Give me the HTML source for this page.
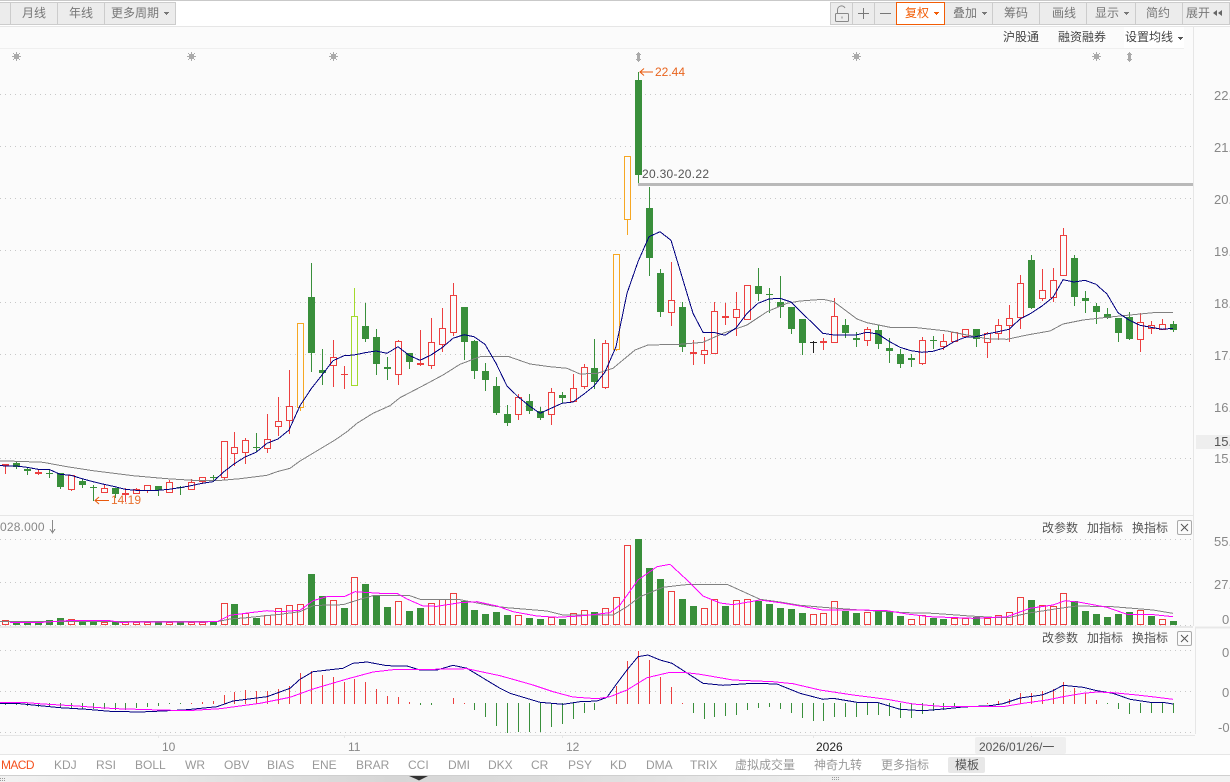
<!DOCTYPE html>
<html lang="zh">
<head>
<meta charset="utf-8">
<title>K线图</title>
<style>
html,body{margin:0;padding:0;background:#fbfbfb}
#p{position:relative;width:1230px;height:782px;overflow:hidden;background:#fbfbfb;font:12px/16px "Liberation Sans","Noto Sans CJK SC",sans-serif;color:#777}
.t{position:absolute;white-space:nowrap;height:16px;line-height:16px}
.b{position:absolute}
.c{color:#555}
.a{color:#888;left:1214px;font-size:13px}
.i{color:#999;top:757px}
svg{position:absolute;left:0;top:0}
</style>
</head>
<body>
<div id="p">
<div class="b" style="left:0;top:0;width:1230px;height:26px;background:#fff"></div>
<div class="b" style="left:0;top:0;width:1230px;height:1px;background:#c9c9c9"></div>
<div class="b" style="left:0;top:26px;width:1230px;height:1px;background:#e6e6e6"></div>
<div class="b" style="left:0;top:48px;width:1184px;height:1px;background:#efefef"></div>
<div class="b" style="left:1124px;top:27px;width:60px;height:21px;background:#fff"></div>

<div class="b" style="left:-1px;top:2px;width:175px;height:21px;background:#ececec;border:1px solid #ccc"></div>
<div class="b" style="left:10px;top:3px;width:1px;height:21px;background:#ccc"></div>
<div class="b" style="left:57px;top:3px;width:1px;height:21px;background:#ccc"></div>
<div class="b" style="left:104px;top:3px;width:1px;height:21px;background:#ccc"></div>

<div class="b" style="left:830px;top:2px;width:398px;height:21px;background:#ececec;border:1px solid #ccc"></div>
<div class="b" style="left:852px;top:3px;width:1px;height:21px;background:#ccc"></div>
<div class="b" style="left:874px;top:3px;width:1px;height:21px;background:#ccc"></div>
<div class="b" style="left:992px;top:3px;width:1px;height:21px;background:#ccc"></div>
<div class="b" style="left:1039px;top:3px;width:1px;height:21px;background:#ccc"></div>
<div class="b" style="left:1086px;top:3px;width:1px;height:21px;background:#ccc"></div>
<div class="b" style="left:1135px;top:3px;width:1px;height:21px;background:#ccc"></div>
<div class="b" style="left:1182px;top:3px;width:1px;height:21px;background:#ccc"></div>
<div class="b" style="left:896px;top:2px;width:47px;height:21px;background:#fff;border:1px solid #f25c05"></div>

<div class="t" style="left:22px;top:5px">月线</div>
<div class="t" style="left:69px;top:5px">年线</div>
<div class="t" style="left:111px;top:5px">更多周期</div>
<div class="t" style="left:905px;top:5px;color:#f25c05">复权</div>
<div class="t" style="left:953px;top:5px">叠加</div>
<div class="t" style="left:1004px;top:5px">筹码</div>
<div class="t" style="left:1052px;top:5px">画线</div>
<div class="t" style="left:1095px;top:5px">显示</div>
<div class="t" style="left:1146px;top:5px">简约</div>
<div class="t" style="left:1186px;top:5px">展开</div>
<div class="t" style="left:1003px;top:29px;color:#444">沪股通</div>
<div class="t" style="left:1058px;top:29px;color:#444">融资融券</div>
<div class="t" style="left:1125px;top:29px;color:#444">设置均线</div>

<svg id="ch" width="1230" height="782" viewBox="0 0 1230 782">
<g fill="none" stroke-width="1" shape-rendering="crispEdges">
<path stroke="#c8c8c8" stroke-dasharray="1 4" d="M0 94.5H1193M0 146.5H1193M0 198.5H1193M0 250.5H1193M0 302.5H1193M0 354.5H1193M0 406.5H1193M0 458.5H1193M0 539.5H1193M0 582.5H1193M0 625.5H1193M0 650.5H1195M0 691.5H1195M0 732.5H1195"/>
<path stroke="#e6e6e6" d="M1193.5 27V626M1195.5 627V734M0 515.5H1193M0 735.5H1195M0 754.5H1230M158.5 735V738M344.5 735V738M562.5 735V738M813.5 735V738M1031.5 735V738"/>
<path stroke="#e8e8e8" stroke-width="2" d="M0 627H1193M1195 627.5H1230"/>
<path stroke="#cfcfcf" d="M0 775.5H1230"/>
</g>
<g id="cand" shape-rendering="crispEdges"></g>
<g id="vols" shape-rendering="crispEdges"></g>
<g id="hist" shape-rendering="crispEdges"></g>
<g fill="none" stroke-width="1" shape-rendering="crispEdges">
<polyline stroke="#808080" points="0,461 17,461.3 43,462.3 67,466.7 93,470.7 133,475.7 167,478.7 193,480.3 217,480.7 240,478.7 267,475.3 277,471.7 290,468.3 300,461 335,440 347,431.7 357,423.3 373,413.3 390,405.7 400,397.7 423,385.7 443,375 460,364.3 480,356.7 508,356.3 530,364 550,366.7 567,368.3 580,374 597,373.3 613,368.3 635,350 648,345 680,344.3 703,342.3 723,333.3 747,325 767,311.7 787,303.3 800,301 823,299.3 834,301.7 857,319 867,322.7 890,327.3 917,327.7 947,331 967,335 987,338.7 1007,339.3 1027,335 1050,331 1063,324 1083,320 1107,317.3 1133,314.7 1157,312.3 1173,312.3"/>
<polyline stroke="#000080" points="0,465.7 16,466 27,467.3 38,469.3 49,469.3 60,474.3 71,475.3 82,478.7 93,481.7 104,484.3 115,486.7 125,489.3 136,490.3 147,490.3 158,490.3 169,489.3 180,487.7 191,485.7 202,483.3 213,481.7 224,471.7 234,464 245,457 256,452.3 267,443.3 278,439 289,430 300,405.7 311,389 322,375 333,360.7 344,355.7 354,355 365,352.7 376,351 387,353.3 398,346.7 409,355.3 420,360.3 431,355 442,347.7 453,338.3 464,334.7 474,336.7 485,344.3 496,363.3 507,386 518,396.7 529,405.7 540,413.3 551,408.3 562,403.3 573,402 584,394 594,386 605,372 616,346.7 627,293.3 638,261.7 649,236.7 660,231.7 671,240.3 682,276.7 693,313.3 703,332.3 714,332.3 725,335.3 736,328 747,313.3 758,303.3 769,299 780,298.3 791,302 800,311 823,333.3 834,335 845,335 856,335 867,332.3 878,334 889,341.3 900,347.3 911,350.7 922,352.3 933,351.3 943,348.3 954,341.7 965,337.3 976,336.7 987,334 998,331.7 1009,329.3 1020,319 1031,313.3 1042,306 1053,297.3 1063,279.7 1074,282 1085,280.3 1096,284.3 1107,294 1118,312.7 1129,320 1140,325.3 1151,327.3 1162,329.3 1173,328.3"/>
<polyline stroke="#808080" points="0,621.7 217,621.7 230,619 247,617.7 263,616 280,614.3 300,611.7 313,605.7 327,605 343,604.7 360,599.3 373,595.7 410,595.7 420,599.3 460,599.7 493,606 507,607.7 547,611 563,615 613,615 627,606.7 640,596.7 663,587.3 680,585.3 690,584.3 727,584.3 760,599.3 780,602 800,605.3 823,607.3 860,610 907,612.7 933,613.3 970,616 993,617.3 1010,617.3 1027,613.3 1060,608.3 1077,606 1113,606.7 1153,610 1173,613.3"/>
<polyline stroke="#ff00ff" points="10,622.3 43,622.3 67,620.7 110,620.7 120,622.3 217,621.7 230,615.3 250,612.7 267,610.7 280,611.7 300,610.3 313,600.7 328,596.3 345,596.3 355,591.7 380,593.3 397,593.3 407,599 423,606 437,606.3 460,602.7 477,601.7 497,606 513,611.7 537,616 557,617.3 580,616 610,612.7 620,605 638,580 657,566.7 670,564.3 687,580 703,596 720,603 733,604.7 760,600 780,602.7 800,606 823,610 830,610 860,610 887,610.7 907,614 930,616.7 973,618.3 1007,616.7 1030,608.3 1053,605 1065,600.7 1080,602.3 1107,607.3 1127,614.3 1150,614.3 1173,616.7"/>
<polyline stroke="#000080" points="0,703.3 20,703.7 33,705 60,707.7 87,709.3 110,711.3 140,712 163,711 187,709.7 217,706.7 233,701 267,696.7 290,688.3 300,679.3 313,671.7 343,668.3 353,663.3 367,662 387,665.7 407,666 420,670 437,670 453,665.3 467,668.3 500,688.3 510,693.3 540,702.3 563,704.3 580,701.7 597,701 607,697.3 617,683.3 627,670 638,656.7 648,655 660,660 672,663.3 703,683.3 723,685.3 753,683.3 777,684 800,693.3 823,699.3 833,698.3 857,702.3 877,702.3 900,709.3 923,710.7 947,708.7 963,707 990,705.7 1003,703.7 1020,698 1042,695 1053,690.7 1063,685.3 1083,687.3 1097,690.7 1113,693.3 1130,699.3 1150,702.3 1163,702.3 1173,704"/>
<polyline stroke="#ff00ff" points="0,702.3 22,702.3 43,704 77,706 100,707.7 117,708.7 150,709.7 187,710.7 220,708.7 260,703.3 290,697.3 313,689 347,679 373,672 393,669.7 433,669.3 467,668.7 500,675.7 520,681.3 533,685 553,691.7 573,697 597,698.7 610,696.7 627,690 647,677.7 670,672.3 683,672.3 700,674.3 733,680 773,681.7 793,683.7 820,690 853,695 887,699.3 913,704 940,706.3 993,706.5 1003,706.7 1023,703.3 1047,700 1063,696.7 1083,693.3 1097,692 1113,692.7 1137,695 1157,697.3 1173,699.3"/>
</g>
<g shape-rendering="crispEdges">
<rect x="638" y="183" width="555" height="3" fill="#b9b9b9"/>
</g>
<g fill="#aaa" shape-rendering="crispEdges">
<path d="M14 54h5v5h-5zM16 52h1v9h-1zM12 56h9v1h-9zM13 53h1v1h-1zM19 53h1v1h-1zM13 59h1v1h-1zM19 59h1v1h-1z"/>
<path d="M189 54h5v5h-5zM191 52h1v9h-1zM187 56h9v1h-9zM188 53h1v1h-1zM194 53h1v1h-1zM188 59h1v1h-1zM194 59h1v1h-1z"/>
<path d="M331 54h5v5h-5zM333 52h1v9h-1zM329 56h9v1h-9zM330 53h1v1h-1zM336 53h1v1h-1zM330 59h1v1h-1zM336 59h1v1h-1z"/>
<path d="M854 54h5v5h-5zM856 52h1v9h-1zM852 56h9v1h-9zM853 53h1v1h-1zM859 53h1v1h-1zM853 59h1v1h-1zM859 59h1v1h-1z"/>
<path d="M1094 54h5v5h-5zM1096 52h1v9h-1zM1092 56h9v1h-9zM1093 53h1v1h-1zM1099 53h1v1h-1zM1093 59h1v1h-1zM1099 59h1v1h-1z"/>
<path d="M637 53h3v8h-3zM638 52h1v10h-1zM636 54h5v1h-5zM636 59h5v1h-5z"/>
<path d="M1128 53h3v8h-3zM1129 52h1v10h-1zM1127 54h5v1h-5zM1127 59h5v1h-5z"/>
</g>
<g fill="none" stroke="#e8590c" stroke-width="1">
<path d="M640 72H653M644 68.5L640 72L644 75.5"/>
<path d="M95 500.5H109M99 497L95 500.5L99 504"/>
</g>
<g fill="none" stroke="#8a8a8a" stroke-width="1" shape-rendering="crispEdges">
<path d="M52.5 520V533M50 529L52.5 533L55 529"/>
</g>
<g fill="#777" shape-rendering="crispEdges">
<path d="M164 12h5v1h-5zM165 13h3v1h-3zM166 14h1v1h-1z"/>
<path d="M982 12h5v1h-5zM983 13h3v1h-3zM984 14h1v1h-1z"/>
<path d="M1124 12h5v1h-5zM1125 13h3v1h-3zM1126 14h1v1h-1z"/>
<path d="M858 13h11v1h-11zM863 8h1v11h-1zM880 13h11v1h-11z"/>
</g>
<path fill="#f25c05" shape-rendering="crispEdges" d="M934 12h5v1h-5zM935 13h3v1h-3zM936 14h1v1h-1z"/>
<path fill="#555" shape-rendering="crispEdges" d="M1178 37h5v1h-5zM1179 38h3v1h-3zM1180 39h1v1h-1z"/>
<path fill="#666" d="M1217 10v6l-4-3zM1222 10v6l-4-3z"/>
<g fill="none" stroke="#888" stroke-width="1">
<rect x="835.5" y="13.5" width="13" height="8" rx="1"/>
<path d="M837.5 13.5V10a4 4 0 0 1 7.5-2"/>
<path d="M842 16.5v2"/>
</g>
<g fill="#fbfbfb" stroke="#aaa" stroke-width="1">
<rect x="1177.5" y="520.5" width="14" height="14" rx="1.5"/>
<rect x="1177.5" y="631.5" width="14" height="14" rx="1.5"/>
</g>
<g fill="none" stroke="#555" stroke-width="1">
<path d="M1181 524L1188 531M1188 524L1181 531M1181 635L1188 642M1188 635L1181 642"/>
</g>
</svg>

<div class="b" style="left:0;top:776px;width:1230px;height:6px;background:linear-gradient(90deg,#f2f2f2 0,#d6d6d6 32%,#e0e0e0 50%,#f0f0f0 70%,#f2f2f2 100%)"></div>
<svg width="1230" height="782" viewBox="0 0 1230 782" style="pointer-events:none">
<path fill="#333" d="M409 776h19l-6 3l-3 1.5l-3 -1.5z"/>
<path fill="#999" shape-rendering="crispEdges" d="M0 778h1v1h-1zM2 778h1v1h-1zM4 778h1v1h-1zM0 780h1v1h-1zM2 780h1v1h-1zM4 780h1v1h-1zM832 777h1v1h-1zM834 777h1v1h-1zM836 777h1v1h-1zM838 777h1v1h-1zM832 779h1v1h-1zM834 779h1v1h-1zM836 779h1v1h-1zM838 779h1v1h-1z"/>
</svg>

<div class="t" style="left:655px;top:64px;color:#e8641e">22.44</div>
<div class="t" style="left:111px;top:492px;color:#e8702e">14.19</div>
<div class="t c" style="left:642px;top:166px;letter-spacing:.3px">20.30-20.22</div>
<div class="t" style="left:0;top:519px;color:#888;letter-spacing:.2px">028.000</div>

<div class="t a" style="top:88px">22.00</div>
<div class="t a" style="top:140px">21.00</div>
<div class="t a" style="top:192px">20.00</div>
<div class="t a" style="top:244px">19.00</div>
<div class="t a" style="top:296px">18.00</div>
<div class="t a" style="top:348px">17.00</div>
<div class="t a" style="top:400px">16.00</div>
<div class="t a" style="top:451px">15.00</div>
<div class="b" style="left:1196px;top:435px;width:34px;height:14px;background:#eee"></div>
<div class="t" style="left:1214px;top:434px;color:#555;font-size:13px">15.64</div>
<div class="t a" style="top:534px">55.00</div>
<div class="t a" style="top:577px">27.00</div>
<div class="t a" style="left:1222px;top:612px">0.00</div>
<div class="t a" style="left:1222px;top:645px">0.50</div>
<div class="t a" style="left:1222px;top:685px">0.00</div>
<div class="t a" style="left:1218px;top:720px">-0.50</div>

<div class="t c" style="left:1042px;top:520px">改参数</div>
<div class="t c" style="left:1087px;top:520px">加指标</div>
<div class="t c" style="left:1132px;top:520px">换指标</div>
<div class="t c" style="left:1042px;top:630px">改参数</div>
<div class="t c" style="left:1087px;top:630px">加指标</div>
<div class="t c" style="left:1132px;top:630px">换指标</div>

<div class="t" style="left:162px;top:739px;color:#888">10</div>
<div class="t" style="left:348px;top:739px;color:#888">11</div>
<div class="t" style="left:566px;top:739px;color:#888">12</div>
<div class="t" style="left:816px;top:739px;color:#222">2026</div>
<div class="b" style="left:975px;top:737px;width:91px;height:17px;background:#efefef;border-radius:2px"></div>
<div class="t c" style="left:979px;top:739px">2026/01/26/一</div>

<div class="b" style="left:0;top:755px;width:1230px;height:20px;background:#fff"></div>
<div class="t i" style="left:1px;color:#f4511e;letter-spacing:-.6px">MACD</div>
<div class="t i" style="left:54px">KDJ</div>
<div class="t i" style="left:96px">RSI</div>
<div class="t i" style="left:135px">BOLL</div>
<div class="t i" style="left:185px">WR</div>
<div class="t i" style="left:224px">OBV</div>
<div class="t i" style="left:267px">BIAS</div>
<div class="t i" style="left:312px">ENE</div>
<div class="t i" style="left:356px">BRAR</div>
<div class="t i" style="left:408px">CCI</div>
<div class="t i" style="left:448px">DMI</div>
<div class="t i" style="left:488px">DKX</div>
<div class="t i" style="left:531px">CR</div>
<div class="t i" style="left:568px">PSY</div>
<div class="t i" style="left:610px">KD</div>
<div class="t i" style="left:646px">DMA</div>
<div class="t i" style="left:690px">TRIX</div>
<div class="t i" style="left:735px">虚拟成交量</div>
<div class="t i" style="left:814px">神奇九转</div>
<div class="t i" style="left:881px">更多指标</div>
<div class="b" style="left:948px;top:757px;width:37px;height:16px;background:#e8e8e8;border-radius:2px"></div>
<div class="t c" style="left:955px;top:757px">模板</div>
</div>

<script>
(function(){
var D="r464 466 464 473,g463 467 462 468,g469 471 467 474,r472 474 470 474,g473 474 469 477,g473 487 473 488,r475 489 475 490,g481 485 479 487,g487 488 485 500,r488 492 485 492,g488 494 488 497,r493 495 488 501,r489 493 488 493,r485 490 485 492,g486 490 486 495,r482 492 480 492,g487 488 486 494,r482 489 479 489,r477 481 477 483,g477 478 475 481,r441 477 441 479,r447 453 432 465,r440 452 438 463,g447 448 433 451,r439 448 414 452,r421 426 397 435,r406 420 370 433,o323 407 323 410,g297 353 263 371,g370 373 349 384,r357 365 340 386,r374 375 366 388,y316 385 288 385,g326 339 303 341,g337 364 329 374,g367 369 357 379,r341 374 340 384,g353 362 353 368,r363 365 330 365,r342 365 318 368,r328 344 308 351,r295 332 283 335,g307 342 307 359,g341 371 340 378,g371 380 363 390,g386 413 377 414,g414 423 405 425,r397 414 394 419,g401 411 394 413,g411 418 407 419,r392 414 388 424,g395 398 392 402,r388 401 374 401,r367 386 364 388,g368 382 339 388,r343 387 340 388,o254 349 254 350,o156 219 156 234,g80 175 72 184,g208 258 187 275,g273 312 269 316,r300 312 262 325,g307 347 302 351,r352 354 340 364,r350 354 337 363,r311 353 302 353,r316 318 303 324,r309 317 292 335,r285 319 285 319,g286 294 268 300,g294 295 288 312,g302 307 276 317,g307 329 307 333,g319 343 319 354,k342 343 341 352,r341 343 338 349,r316 342 298 342,g325 333 319 337,g338 340 332 346,r329 340 327 345,g330 344 325 348,g348 351 338 362,g354 364 349 367,g358 360 354 366,r340 363 337 364,g340 341 336 348,r341 346 334 349,r332 341 332 341,r329 336 329 337,g329 339 329 346,r333 342 332 357,r325 333 319 339,r318 325 305 341,r283 317 275 328,g260 308 255 308,r290 298 269 300,r280 297 268 301,r235 275 228 275,g258 297 255 305,g298 301 291 312,g306 312 303 323,g314 318 308 318,g318 333 318 341,g317 339 312 339,r322 339 313 351,r325 328 321 333,r324 329 319 329,g324 330 321 331".split(",");
var V="r620 g622 g622 g622 g620 g618 r619 g622 g622 r622 g622 r622 r622 r622 g622 r622 g622 r622 r622 g622 r603 g604 r613 g618 r615 r608 r605 r604 g574 g596 r600 g608 r577 g584 g595 g607 r601 g611 g608 r603 r599 r593 g601 g610 g614 g612 g615 r615 g618 g619 r617 g619 r613 r610 g612 r608 r597 r545 g539 g568 g579 r591 g599 g606 r608 r599 g606 r600 r599 g601 g604 g608 g609 g613 r614 r613 r601 g611 g613 r612 g610 g611 g616 r619 r615 g618 g619 r618 r618 g617 r618 r615 r612 r597 g600 r605 r606 r593 g601 g611 g614 g617 g614 g612 r610 g616 r619 g621".split(" ");
var H=[705,705,706,707,707,708,708,709,709,709,710,710,708,707,706,704,704,702.5,701.5,701,695,692,690,691,691,689,686,673,671,675,677,682,679,682,689,696,697,702,705,705,0,698,702.5,710,717,726,733,732,732,732,727,724,719,713,710,0,686,661,651,660,677,687,702.5,713,719,717,716,715,710,708,707,709,713,718,721,721,717,717,717,715,715,716,718,718,714,711,710,706,0,0,702.5,701,699,693,693,691,689,682,688,693,700,704,709,714,713,713,713,713];
var C={r:"#ec3f3f",g:"#398f3b",o:"#f6a723",y:"#a2d92c",k:"#222222"};
var drop=[11,21,32,43,54,65,75,86,97];
function X(i){var n=0;for(var j=0;j<drop.length;j++)if(drop[j]<=i)n++;return 5+11*i-n;}
var a="",b="",c="";
for(var i=0;i<D.length;i++){
  var s=D[i],t=s[0],v=s.slice(1).split(" ").map(Number),x=X(i),col=C[t];
  var top=v[0],bot=v[1],hi=v[2],lo=v[3];
  a+='<rect x="'+x+'" y="'+hi+'" width="1" height="'+(lo-hi+1)+'" fill="'+col+'"/>';
  if(t=="g"||bot-top<=2){
    a+='<rect x="'+(x-3)+'" y="'+top+'" width="7" height="'+Math.max(bot-top,1)+'" fill="'+col+'"/>';
  }else{
    a+='<rect x="'+(x-2.5)+'" y="'+(top+.5)+'" width="6" height="'+(bot-top)+'" fill="#fbfbfb" stroke="'+col+'"/>';
  }
  var vt=V[i][0],vy=+V[i].slice(1);
  if(vt=="g"){
    b+='<rect x="'+(x-3)+'" y="'+vy+'" width="7" height="'+(625-vy)+'" fill="'+C.g+'"/>';
  }else{
    b+='<rect x="'+(x-2.5)+'" y="'+(vy+.5)+'" width="6" height="'+(624-vy)+'" fill="#fbfbfb" stroke="'+C.r+'"/>';
  }
  if(H[i]){
    var y=H[i],up=y<703.5,y0=up?Math.round(y):703,h=up?703-y0+1:Math.round(y)-703;
    c+='<rect x="'+x+'" y="'+y0+'" width="1" height="'+Math.max(h,1)+'" fill="'+(up?C.r:C.g)+'"/>';
  }
}
var N="http://www.w3.org/2000/svg";
function put(id,str){
  var tmp=document.createElementNS(N,"svg");
  tmp.innerHTML=str;
  var g=document.getElementById(id);
  while(tmp.firstChild)g.appendChild(tmp.firstChild);
}
put("cand",a);put("vols",b);put("hist",c);
})();
</script>
</body>
</html>
